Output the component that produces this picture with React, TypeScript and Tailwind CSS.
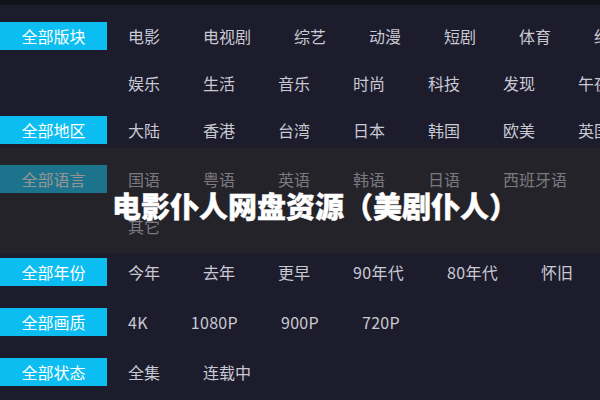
import React from "react";

type Group = { label: string; lines: string[][]; mt: string };

const groups: Group[] = [
  {
    label: "全部版块",
    mt: "mt-[17px]",
    lines: [
      ["电影", "电视剧", "综艺", "动漫", "短剧", "体育", "纪录"],
      ["娱乐", "生活", "音乐", "时尚", "科技", "发现", "午夜"],
    ],
  },
  { label: "全部地区", mt: "mt-[19px]", lines: [["大陆", "香港", "台湾", "日本", "韩国", "欧美", "英国"]] },
  {
    label: "全部语言",
    mt: "mt-[21px]",
    lines: [["国语", "粤语", "英语", "韩语", "日语", "西班牙语"], ["其它"]],
  },
  { label: "全部年份", mt: "mt-[18px]", lines: [["今年", "去年", "更早", "90年代", "80年代", "怀旧"]] },
  { label: "全部画质", mt: "mt-[22px]", lines: [["4K", "1080P", "900P", "720P"]] },
  { label: "全部状态", mt: "mt-[22px]", lines: [["全集", "连载中"]] },
];

export default function App() {
  return (
    <div
      className="relative w-[600px] h-[400px] overflow-hidden bg-[#1d1c2c]"
      style={{ fontFamily: '"Noto Sans CJK SC", "Noto Sans", sans-serif' }}
    >
      <div className="h-[5px] bg-[#12121b]" />
      {groups.map((g) => (
        <div key={g.label} className={`flex ${g.mt}`}>
          <div className="w-[107px] h-[28px] shrink-0 bg-[#0bbdf0] text-white text-[16px] leading-[28px] text-center">
            {g.label}
          </div>
          <div className="ml-[21px] flex flex-col gap-[19px]">
            {g.lines.map((line, i) => (
              <div key={i} className="flex h-[28px] items-center whitespace-nowrap">
                {line.map((it) => (
                  <span
                    key={it}
                    className={
                      /\d/.test(it)
                        ? "mr-[43px] text-[16px] tracking-[0.3px] text-[#c9c9d3]"
                        : "mr-[43px] text-[16px] text-[#c9c9d3]"
                    }
                  >
                    {it}
                  </span>
                ))}
              </div>
            ))}
          </div>
        </div>
      ))}
      <div className="absolute left-0 right-0 top-[148px] h-[105px] bg-[rgba(44,42,40,0.5)]">
        <div className="pl-[112px] pt-[43px] text-[29px] leading-[29px] font-black text-white whitespace-nowrap [-webkit-text-stroke:0.4px_white]">
          电影仆人网盘资源（美剧仆人）
        </div>
      </div>
    </div>
  );
}
